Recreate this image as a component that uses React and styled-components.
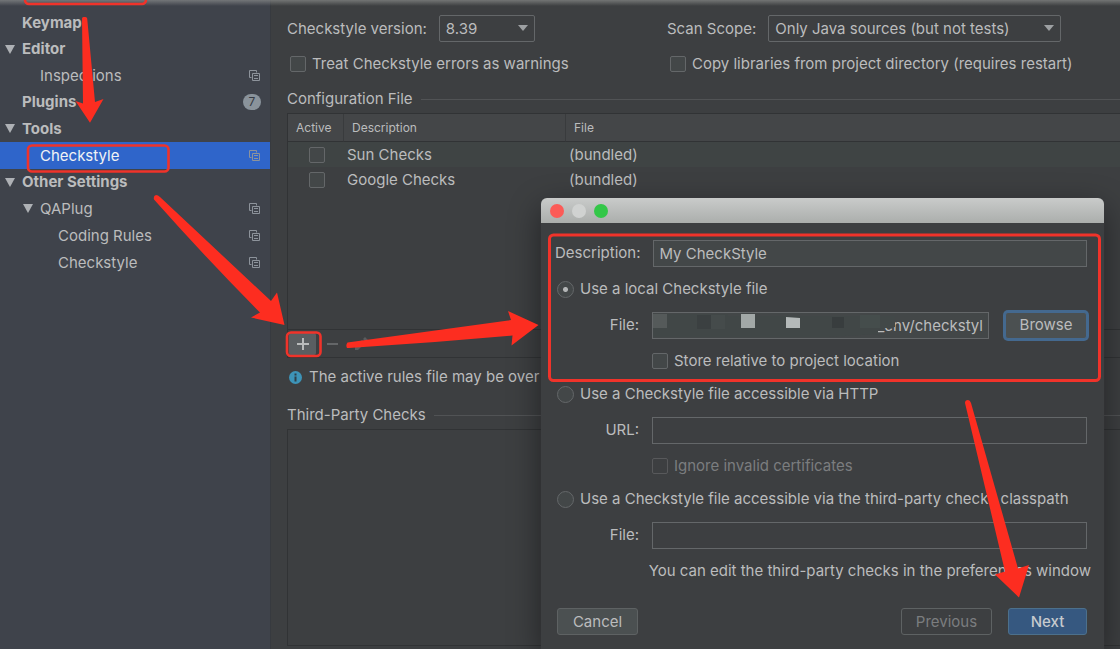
import React from "react";
import styled, { createGlobalStyle, css } from "styled-components";

const c = {
  text: "#bbbcbd",
  dim: "#7b7d7f",
  panel: "#3d3f41",
  field: "#434748",
  line: "#646769",
  dark: "#313335",
  red: "#fd2d20",
};

const Global = createGlobalStyle`
  * { box-sizing: border-box; }
  body { margin: 0; background: ${c.panel}; }
  body, button, input, select, table {
    font-family: Inter, "Liberation Sans", sans-serif;
    font-size: 15px;
    line-height: 20px;
    color: ${c.text};
  }
`;

const Page = styled.div`
  position: relative;
  display: flex;
  min-height: 100vh;
  overflow: hidden;
  background: ${c.panel};
`;

const TopShade = styled.div`
  position: absolute;
  inset: 0 0 auto 0;
  height: 6px;
  background: linear-gradient(rgba(150, 152, 150, 0.6), rgba(110, 112, 110, 0));
`;

/* ---------- settings tree ---------- */

const Sidebar = styled.nav`
  flex: 0 0 271px;
  padding-top: 10px;
  background: #3f434b;
  border-right: 1px solid #373a3f;
`;

const Tree = styled.ul`
  list-style: none;
  margin: 0;
  padding: 0;
`;

const TreeRow = styled.li`
  display: flex;
  align-items: center;
  height: ${(p) => (p.$depth || p.$tall ? 27 : 26)}px;
  padding: 0 10px 0 ${(p) => 4 + p.$depth * 18}px;
  font-weight: ${(p) => (p.$depth ? 400 : 700)};
  ${(p) => p.$selected && css`background: #2f65ca; color: #f0f2f5;`}
`;

const Twisty = styled.span`
  display: flex;
  flex: 0 0 18px;
  padding-left: 1px;
`;

const RowLink = styled.a`
  flex: 1;
  color: inherit;
  text-decoration: none;
`;

const Badge = styled.span`
  width: 18px;
  margin-right: -1px;
  border-radius: 8px;
  background: #8a939b;
  color: #353a42;
  font-size: 12px;
  font-weight: 400;
  line-height: 16px;
  text-align: center;
`;

const tree = [
  { label: "Keymap", depth: 0 },
  { label: "Editor", depth: 0, open: true },
  { label: "Inspections", depth: 1, copy: true },
  { label: "Plugins", depth: 0, badge: 7 },
  { label: "Tools", depth: 0, open: true, tall: true },
  { label: "Checkstyle", depth: 1, copy: true, selected: true },
  { label: "Other Settings", depth: 0, open: true },
  { label: "QAPlug", depth: 1, open: true, copy: true },
  { label: "Coding Rules", depth: 2, copy: true },
  { label: "Checkstyle", depth: 2, copy: true },
];

const Triangle = () => (
  <svg width="10" height="9" viewBox="0 0 10 9" aria-hidden="true">
    <path d="M0 0h10L5 9z" fill="#aeb1b5" />
  </svg>
);

const CopyIcon = () => (
  <svg width="11" height="11" viewBox="0 0 11 11" fill="none" stroke="#8d939b" aria-hidden="true">
    <path d="M2.5 7.5H.5v-7h7v2" />
    <path d="M3.5 3.5h7v7h-7zM5 5.500h4M5 8.500h4" />
  </svg>
);

/* ---------- shared controls ---------- */

const Check = styled.input.attrs({ type: "checkbox" })`
  appearance: none;
  flex: none;
  width: 16px;
  height: 16px;
  margin: 0;
  border: 1px solid ${c.line};
  border-radius: 2px;
  background: ${c.field};
  &:disabled { background: transparent; border-color: #58595b; }
`;

const Radio = styled.input.attrs({ type: "radio" })`
  appearance: none;
  flex: none;
  width: 17px;
  height: 17px;
  margin: 0;
  border: 1px solid ${c.line};
  border-radius: 50%;
  background: ${c.field};
  &:checked { background: radial-gradient(circle, #b4b6b7 0 2px, ${c.field} 3px); }
`;

const Choice = styled.label`
  display: flex;
  align-items: center;
  gap: 6px;
  height: 26px;
  white-space: nowrap;
  color: ${(p) => (p.$dim ? c.dim : c.text)};
`;

const SelectBox = styled.span`
  position: relative;
  display: flex;
  width: ${(p) => p.$width}px;
  svg { position: absolute; right: 7px; top: 10px; pointer-events: none; }
`;

const Select = styled.select`
  appearance: none;
  width: 100%;
  height: 27px;
  padding: 0 24px 0 6px;
  border: 1px solid ${c.line};
  border-radius: 2px;
  background: transparent;
`;

const Dropdown = ({ id, width, value }) => (
  <SelectBox $width={width}>
    <Select id={id} defaultValue={value}>
      <option>{value}</option>
    </Select>
    <svg width="10" height="7" viewBox="0 0 10 7" aria-hidden="true">
      <path d="M0 0h10L5 6z" fill="#9da0a2" />
    </svg>
  </SelectBox>
);

/* ---------- checkstyle settings ---------- */

const Main = styled.main`
  flex: 1;
  min-width: 0;
  display: flex;
  flex-direction: column;
  padding: 15px 0 3px 16px;
`;

const Options = styled.div`
  display: grid;
  grid-template-columns: 380px 1fr;
  row-gap: 9px;
`;

const Option = styled.div`
  display: flex;
  align-items: center;
  gap: 12px;
  white-space: nowrap;
  padding-left: ${(p) => p.$inset || 0}px;
`;

const SectionTitle = styled.h2`
  display: flex;
  align-items: center;
  gap: 8px;
  margin: ${(p) => p.$top}px 0 4px;
  font-size: 15px;
  font-weight: 400;
  &::after { content: ""; flex: 1; border-top: 1px solid #515355; }
`;

const TableFrame = styled.div`
  height: 217px;
  border: solid ${c.dark};
  border-width: 1px 0 1px 1px;
`;

const Table = styled.table`
  width: 100%;
  table-layout: fixed;
  border-collapse: separate;
  border-spacing: 0;
  text-align: left;
`;

const Th = styled.th`
  width: ${(p) => p.$width};
  height: 28px;
  padding: 0 8px;
  background: #444648;
  border-bottom: 1px solid ${c.dark};
  font-size: 12px;
  font-weight: 400;
  & + & { border-left: 1px solid #393b3d; }
`;

const Tr = styled.tr`
  background: ${(p) => (p.$striped ? "#3f4444" : "transparent")};
`;

const Td = styled.td`
  height: 25px;
  padding: 0 4px;
  input { display: block; margin-left: 17px; }
`;

const Toolbar = styled.div`
  display: flex;
  align-items: center;
  gap: 2px;
  height: 28px;
  padding-left: 1px;
  border: solid ${c.dark};
  border-width: 0 0 1px 1px;
`;

const Tool = styled.button`
  display: flex;
  align-items: center;
  justify-content: center;
  width: 27px;
  height: 22px;
  padding: 0;
  border: 0;
  border-radius: 2px;
  background: ${(p) => (p.$on ? "#5a5e61" : "transparent")};
`;

const Info = styled.p`
  display: flex;
  align-items: center;
  gap: 7px;
  margin: 9px 0 0 2px;
  white-space: nowrap;
`;

const ListFrame = styled.div`
  flex: 1;
  border: solid ${c.dark};
  border-width: 1px 0 1px 1px;
`;

/* ---------- dialog ---------- */

const Dialog = styled.section`
  position: absolute;
  left: 541px;
  right: 16px;
  top: 198px;
  bottom: 0;
  border-radius: 6px 6px 0 0;
  background: ${c.panel};
  box-shadow: 0 10px 32px rgba(0, 0, 0, 0.45), 0 0 1px #55585a;
`;

const TitleBar = styled.header`
  display: flex;
  align-items: center;
  gap: 8px;
  height: 25px;
  padding-left: 9px;
  border-radius: 6px 6px 0 0;
  background: linear-gradient(#c9cbca, #abaeac);
`;

const Light = styled.button`
  width: 14px;
  height: 14px;
  padding: 0;
  border: 0;
  border-radius: 50%;
  background: ${(p) => p.$color};
`;

const Form = styled.form`
  display: flex;
  flex-direction: column;
  gap: 7px;
  padding: 17px 17px 0 14px;
`;

const Group = styled.div`
  display: flex;
  flex-direction: column;
  gap: 10px;
`;

const Line = styled.div`
  display: flex;
  align-items: center;
  height: 26px;
`;

const FieldLabel = styled.label`
  flex: 0 0 84px;
  margin-right: 13px;
  text-align: right;
  white-space: nowrap;
`;

const Field = styled.span`
  position: relative;
  flex: 1;
  display: flex;
  min-width: 0;
  svg { position: absolute; left: 0; top: -2px; pointer-events: none; }
`;

const Input = styled.input`
  flex: 1;
  min-width: 0;
  height: 27px;
  padding: 0 5px;
  border: 1px solid ${c.line};
  background: ${(p) => (p.disabled ? "transparent" : c.field)};
  text-align: ${(p) => p.$align || "left"};
`;

const Indent = styled.div`
  padding-left: ${(p) => p.$by}px;
`;

const Note = styled.p`
  margin: 0 -4px 0 0;
  height: 26px;
  line-height: 26px;
  text-align: right;
  white-space: nowrap;
`;

const Button = styled.button`
  height: 27px;
  width: ${(p) => p.$width}px;
  padding: 0;
  border: 1px solid #5e6263;
  border-radius: 3px;
  background: #4b5051;
  ${(p) => p.$focus && css`margin-left: 16px; border-color: #44698f; box-shadow: 0 0 0 2px #44698f;`}
  ${(p) => p.$primary && css`background: #365880; border-color: #4c708c; color: #c6cace; font-weight: 500;`}
  &:disabled { background: transparent; color: ${c.dim}; }
`;

const Footer = styled.footer`
  display: flex;
  gap: 16px;
  margin-top: 17px;
  padding-left: 2px;
  button:first-child { margin-right: auto; }
`;

/* ---------- red annotations drawn over everything ---------- */

const Marks = styled.svg`
  position: absolute;
  left: 0;
  top: 0;
  pointer-events: none;
`;

const Annotations = () => (
  <Marks width="1120" height="649" viewBox="0 0 1120 649" aria-hidden="true">
    <g fill="none" stroke="#f0332a" strokeWidth="2.6">
      <rect x="25" y="-20" width="121" height="24" rx="4" />
      <rect x="28" y="145.5" width="140.5" height="26" rx="4" />
      <rect x="287" y="332.5" width="33.5" height="23.5" rx="4" />
      <rect x="549.5" y="235" width="550" height="145.5" rx="4" strokeWidth="3" />
    </g>
    <g fill={c.red}>
      <path d="M82 18.500Q82 17 83.500 17H85.500Q87 17 87.200 18.500L95 102L103.500 99L90 122.800L75.500 101L83 103.500Z" />
      <path d="M154 199.500Q153 196 156 195Q158 195 160 197L271 301L277 292.500L284.500 325L251 317.500L260 312.500Q205 257 154 199.500Z" />
      <path d="M347 348Q345.500 345 347.500 342.500L511 320L508 311L538.500 325L511.500 345.500L512.500 335.500Q430 343 349 348Z" />
      <path d="M965 403Q965 400 968 400Q970 400 971 403L1018 568.500L1029 565L1019 597.500L995 574.500L1005 571.500Z" />
    </g>
  </Marks>
);

const Mosaic = () => (
  <svg width="250" height="30" viewBox="0 0 250 30" aria-hidden="true">
    <path d="M1 4h75v2h159v11l-9 3v4l-50 3H1z" fill="#414747" />
    <path d="M1 4h14v14H1z" fill="#555a5a" />
    <path d="M45 5h14v14H45z" fill="#3b4041" />
    <path d="M59 5h14v14H59z" fill="#454b4b" />
    <path d="M89 4h14v14H89z" fill="#a2a8a7" />
    <path d="M134 7l14 1v10h-14z" fill="#b4b9b9" />
    <path d="M180 7h12v11h-12z" fill="#383d3e" />
    <path d="M208 5h20v13h-20z" fill="#454d4c" />
    <path d="M228 6h15v11l-5 1h-10z" fill="#424848" />
  </svg>
);

export default function App() {
  return (
    <Page>
      <Global />
      <Sidebar aria-label="Settings">
        <Tree>
          {tree.map((n, i) => (
            <TreeRow key={i} $depth={n.depth} $tall={n.tall} $selected={n.selected}>
              <Twisty>{n.open && <Triangle />}</Twisty>
              <RowLink href="#">{n.label}</RowLink>
              {n.copy && <CopyIcon />}
              {n.badge && <Badge>{n.badge}</Badge>}
            </TreeRow>
          ))}
        </Tree>
      </Sidebar>

      <Main>
        <Options>
          <Option>
            <label htmlFor="version">Checkstyle version:</label>
            <Dropdown id="version" width={96} value="8.39" />
          </Option>
          <Option>
            <label htmlFor="scope">Scan Scope:</label>
            <Dropdown id="scope" width={293} value="Only Java sources (but not tests)" />
          </Option>
          <Option $inset={3}>
            <Choice><Check />Treat Checkstyle errors as warnings</Choice>
          </Option>
          <Option $inset={3}>
            <Choice><Check />Copy libraries from project directory (requires restart)</Choice>
          </Option>
        </Options>

        <SectionTitle $top={12}>Configuration File</SectionTitle>
        <TableFrame>
          <Table>
            <thead>
              <tr>
                <Th $width="55px">Active</Th>
                <Th $width="222px">Description</Th>
                <Th $width="auto">File</Th>
              </tr>
            </thead>
            <tbody>
              <Tr $striped>
                <Td><Check aria-label="Sun Checks active" /></Td>
                <Td>Sun Checks</Td>
                <Td>(bundled)</Td>
              </Tr>
              <Tr>
                <Td><Check aria-label="Google Checks active" /></Td>
                <Td>Google Checks</Td>
                <Td>(bundled)</Td>
              </Tr>
            </tbody>
          </Table>
        </TableFrame>
        <Toolbar>
          <Tool $on aria-label="Add">
            <svg width="12" height="12" viewBox="0 0 12 12"><path d="M5 0h2v5h5v2H7v5H5V7H0V5h5z" fill="#b9bbbc" /></svg>
          </Tool>
          <Tool aria-label="Remove">
            <svg width="12" height="12" viewBox="0 0 12 12"><path d="M1 5h11v2H1z" fill="#646668" /></svg>
          </Tool>
          <Tool aria-label="Edit">
            <svg width="14" height="14" viewBox="0 0 14 14"><path d="M1 10L8 3l3 3-7 7H1zM9 2l2-2 3 3-2 2z" fill="#5a5c5e" /></svg>
          </Tool>
        </Toolbar>
        <Info>
          <svg width="13" height="13" viewBox="0 0 13 13" aria-hidden="true">
            <circle cx="6.500" cy="6.500" r="6.500" fill="#3d94b8" />
            <path d="M5.500 2.500h2v2h-2zM5.500 5.500h2v5h-2z" fill="#2f3f48" />
          </svg>
          The active rules file may be over
        </Info>
        <SectionTitle $top={18}>Third-Party Checks</SectionTitle>
        <ListFrame />
      </Main>

      <TopShade />

      <Dialog role="dialog" aria-label="Add configuration file">
        <TitleBar>
          <Light $color="#fc5b57" aria-label="Close" />
          <Light $color="#d0d2d1" aria-label="Minimize" />
          <Light $color="#33c748" aria-label="Zoom" />
        </TitleBar>
        <Form onSubmit={(e) => e.preventDefault()}>
          <Group>
            <Line>
              <FieldLabel htmlFor="desc">Description:</FieldLabel>
              <Field><Input id="desc" defaultValue="My CheckStyle" /></Field>
            </Line>
            <Indent $by={2}>
              <Choice><Radio name="source" defaultChecked />Use a local Checkstyle file</Choice>
            </Indent>
            <Line>
              <FieldLabel htmlFor="file">File:</FieldLabel>
              <Field>
                <Input id="file" $align="right" defaultValue="_env/checkstyl" />
                <Mosaic />
              </Field>
              <Button type="button" $width={82} $focus>Browse</Button>
            </Line>
            <Indent $by={97}>
              <Choice><Check />Store relative to project location</Choice>
            </Indent>
          </Group>
          <Group>
            <Indent $by={2}>
              <Choice><Radio name="source" />Use a Checkstyle file accessible via HTTP</Choice>
            </Indent>
            <Line>
              <FieldLabel htmlFor="url">URL:</FieldLabel>
              <Field><Input id="url" disabled /></Field>
            </Line>
            <Indent $by={97}>
              <Choice $dim><Check disabled />Ignore invalid certificates</Choice>
            </Indent>
          </Group>
          <Group>
            <Indent $by={2}>
              <Choice><Radio name="source" />Use a Checkstyle file accessible via the third-party checks classpath</Choice>
            </Indent>
            <Line>
              <FieldLabel htmlFor="cpfile">File:</FieldLabel>
              <Field><Input id="cpfile" disabled /></Field>
            </Line>
            <Note>You can edit the third-party checks in the preferences window</Note>
          </Group>
          <Footer>
            <Button type="button" $width={81}>Cancel</Button>
            <Button type="button" $width={91} disabled>Previous</Button>
            <Button type="submit" $width={79} $primary>Next</Button>
          </Footer>
        </Form>
      </Dialog>

      <Annotations />
    </Page>
  );
}
